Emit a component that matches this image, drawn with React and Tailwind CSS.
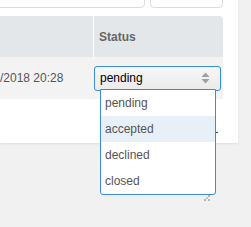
export default function App() {
  const options = ["pending", "accepted", "declined", "closed"];
  return (
    <div
      className="relative w-[251px] h-[227px] overflow-hidden bg-[#f1f1f1]"
      style={{ fontFamily: '"Liberation Sans", Arial, sans-serif' }}
    >
      {/* card */}
      <div className="w-[238px] h-[163px] bg-white shadow-[0_1px_2px_rgba(0,0,0,0.08)]">
        {/* filter inputs (cut off at the top) */}
        <div className="flex gap-[5px] -mt-[20px] h-[28px]">
          <div className="w-[155px] -ml-[10px] border border-[#dcdcdc] rounded-[4px] bg-white" />
          <div className="w-[73px] border border-[#dcdcdc] rounded-[4px] bg-white" />
        </div>

        {/* table */}
        <div className="mt-[8px] w-[223px] rounded-tr-[4px] overflow-hidden">
          <div className="flex h-[41px] bg-[#e4e7ea]">
            <div className="w-[94px] border-r border-white" />
            <div className="flex items-center pl-[5px] text-[12px] font-bold text-[#666]">
              Status
            </div>
          </div>
          <div className="flex items-center h-[42px] bg-[#f3f3f4]">
            <div className="w-[94px] text-[12px] text-[#555]">/2018 20:28</div>
            <div className="flex items-center justify-between w-[127px] h-[25px] pl-[5px] pr-[10px] border border-[#3b8ed4] rounded-[3px] bg-gradient-to-b from-[#f6f6f6] to-[#ebebeb] text-[12px] text-black">
              <span>pending</span>
              <svg width="9" height="12" viewBox="0 0 9 12">
                <path d="M4.5 0.5 L8.5 5 H0.5 Z" fill="#a0a0a0" />
                <path d="M4.5 11.5 L8.5 7 H0.5 Z" fill="#a0a0a0" />
              </svg>
            </div>
          </div>
        </div>
      </div>

      {/* stray pixel */}
      <span className="absolute left-[216px] top-[132px] w-[2px] h-[1px] bg-[#2a5b8a]" />

      {/* open dropdown */}
      <ul className="absolute left-[100px] top-[89px] w-[116px] border border-[#3b8ed4] rounded-b-[3px] bg-white text-[12px] text-[#555] overflow-hidden">
        {options.map((o, i) => (
          <li
            key={o}
            className={`flex items-center h-[26px] pl-[4px] ${i === 1 ? "bg-[#e8f0f7]" : ""}`}
          >
            {o}
          </li>
        ))}
      </ul>

      {/* resize grip */}
      <svg className="absolute left-[204px] top-[195px]" width="6" height="6" viewBox="0 0 6 6">
        <rect x="4" y="0" width="2" height="2" fill="#b5b5b5" />
        <rect x="2" y="2" width="2" height="2" fill="#c5c5c5" />
        <rect x="0" y="4" width="2" height="2" fill="#b5b5b5" />
        <rect x="4" y="4" width="2" height="2" fill="#b5b5b5" />
      </svg>
    </div>
  );
}
